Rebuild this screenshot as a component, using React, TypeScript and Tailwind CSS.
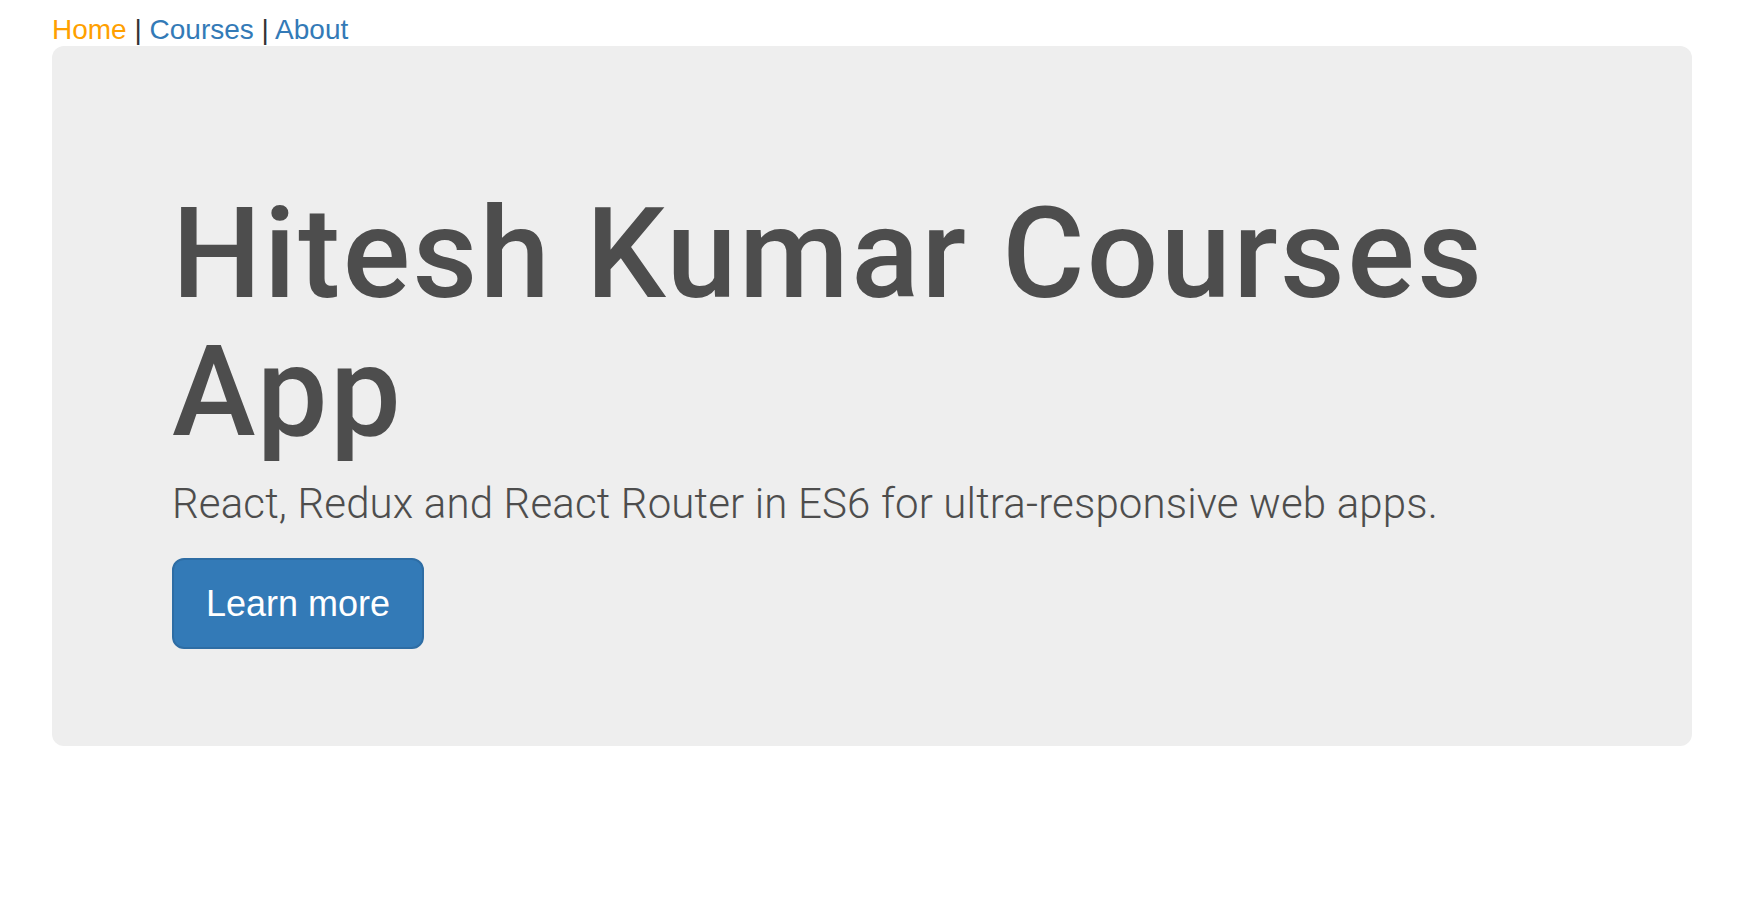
export default function App() {
  return (
    <div className="h-[902px] w-full bg-white" style={{ fontFamily: '"Liberation Sans", Arial, sans-serif' }}>
      <nav className="h-[46px] pl-[52px] pt-[16px] text-[28px] leading-[28px] text-[#333333]">
        <a href="#" className="text-[#ffa000]">Home</a>
        <span> | </span>
        <a href="#" className="text-[#337ab7]">Courses</a>
        <span> | </span>
        <a href="#" className="text-[#337ab7]">About</a>
      </nav>
      <div className="ml-[52px] h-[700px] w-[1640px] rounded-[12px] bg-[#eeeeee] px-[120px] pt-[139px] text-[#4d4d4d]">
        <h1 className="m-0 font-['Roboto',sans-serif] text-[126px] font-medium leading-[138px] tracking-[2.4px]">
          Hitesh Kumar Courses App
        </h1>
        <p className="mt-[13px] font-['Roboto',sans-serif] text-[42px] font-light leading-[60px] tracking-[0.15px]">
          React, Redux and React Router in ES6 for ultra-responsive web apps.
        </p>
        <button className="mt-[24px] flex h-[91px] w-[252px] items-center justify-center rounded-[12px] border-2 border-[#2e6da4] bg-[#337ab7] text-[36px] leading-[48px] text-white">
          Learn more
        </button>
      </div>
    </div>
  );
}
